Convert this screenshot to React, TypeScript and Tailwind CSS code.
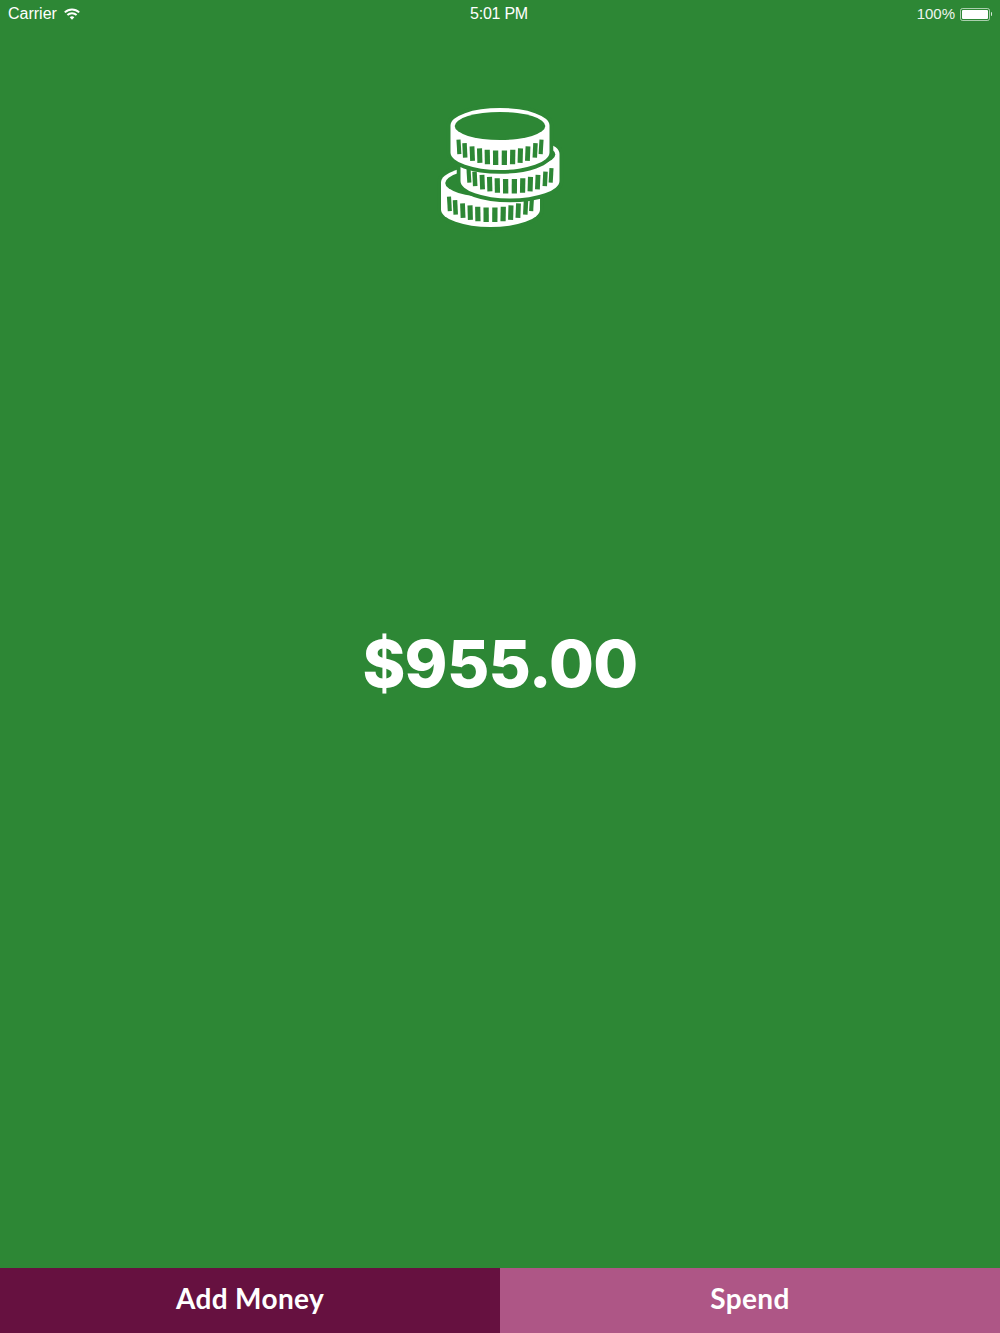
const GREEN = "#2d8735";
const OFFSETS = [-41.5, -35.5, -28, -20.5, -12.8, -4.4, 4.4, 12.8, 20.5, 28, 35.5, 41.5];

function Coin({ cx, cy }: { cx: number; cy: number }) {
  const rx = 49.5;
  const ry = 17.5;
  const h = 27;
  const body = `M${cx - rx} ${cy}A${rx} ${ry} 0 0 1 ${cx + rx} ${cy}V${cy + h}A${rx} ${ry} 0 0 1 ${cx - rx} ${cy + h}Z`;
  return (
    <g>
      <path d={body} fill={GREEN} stroke={GREEN} strokeWidth={7.5} strokeLinejoin="round" />
      <path d={body} fill="white" />
      <ellipse cx={cx} cy={cy + 0.5} rx={45.3} ry={14} fill={GREEN} />
      {OFFSETS.map((o) => {
        const u = o / rx;
        const s = Math.sqrt(1 - u * u);
        const y1 = cy + 1 + 24 * s;
        const width = 2.7 + 2.6 * s;
        return <line key={o} x1={cx + o} x2={cx + o - u} y1={y1} y2={y1 + 14.5} stroke={GREEN} strokeWidth={width} />;
      })}
    </g>
  );
}

function Coins() {
  return (
    <svg width="160" height="145" viewBox="0 0 160 145" className="block">
      <Coin cx={70.5} cy={87.5} />
      <Coin cx={90} cy={59} />
      <Coin cx={80} cy={30.5} />
    </svg>
  );
}

function Wifi() {
  return (
    <svg width="16" height="12" viewBox="0 0 16 12" fill="none" stroke="white" strokeWidth="2">
      <path d="M.8 4.4C5 .4 11 .4 15.2 4.4" />
      <path d="M3.4 7C6 4.6 10 4.6 12.6 7" />
      <path d="M8 11.8 5.7 9.2C7 8 9 8 10.3 9.2Z" fill="white" stroke="none" />
    </svg>
  );
}

export default function App() {
  return (
    <div className="flex h-[1333px] w-[1000px] flex-col bg-[#2d8735] font-['Inter',sans-serif] text-white">
      <div className="flex h-[28px] items-center justify-between px-[8px] font-['Liberation_Sans',sans-serif] text-[16px]">
        <div className="flex w-[200px] items-center gap-[7px]">
          <span>Carrier</span>
          <Wifi />
        </div>
        <span className="-translate-x-[1px] tracking-[-0.25px]">5:01 PM</span>
        <div className="flex w-[200px] items-center justify-end gap-[5px]">
          <span className="text-[15px] text-[#eef5ef]">100%</span>
          <div className="flex items-center">
            <div className="h-[13px] w-[30px] rounded-[2.5px] border border-white/60 p-[1px]">
              <div className="h-full w-full rounded-[1px] bg-white" />
            </div>
            <div className="ml-[0.5px] h-[4px] w-[1.5px] rounded-r-[1px] bg-white/80" />
          </div>
        </div>
      </div>
      <div className="mt-[67px] flex justify-center">
        <Coins />
      </div>
      <div className="mt-[384px] text-center text-[65px] leading-[80px] font-extrabold tracking-[-0.7px]">$955.00</div>
      <div className="flex-1" />
      <div className="flex h-[65px] font-['Lato',sans-serif] text-[28px] font-bold tracking-[0.35px]">
        <div className="flex flex-1 items-center justify-center bg-[#661140] pb-[6px]">Add Money</div>
        <div className="flex flex-1 items-center justify-center bg-[#ae5686] pb-[6px]">Spend</div>
      </div>
    </div>
  );
}
